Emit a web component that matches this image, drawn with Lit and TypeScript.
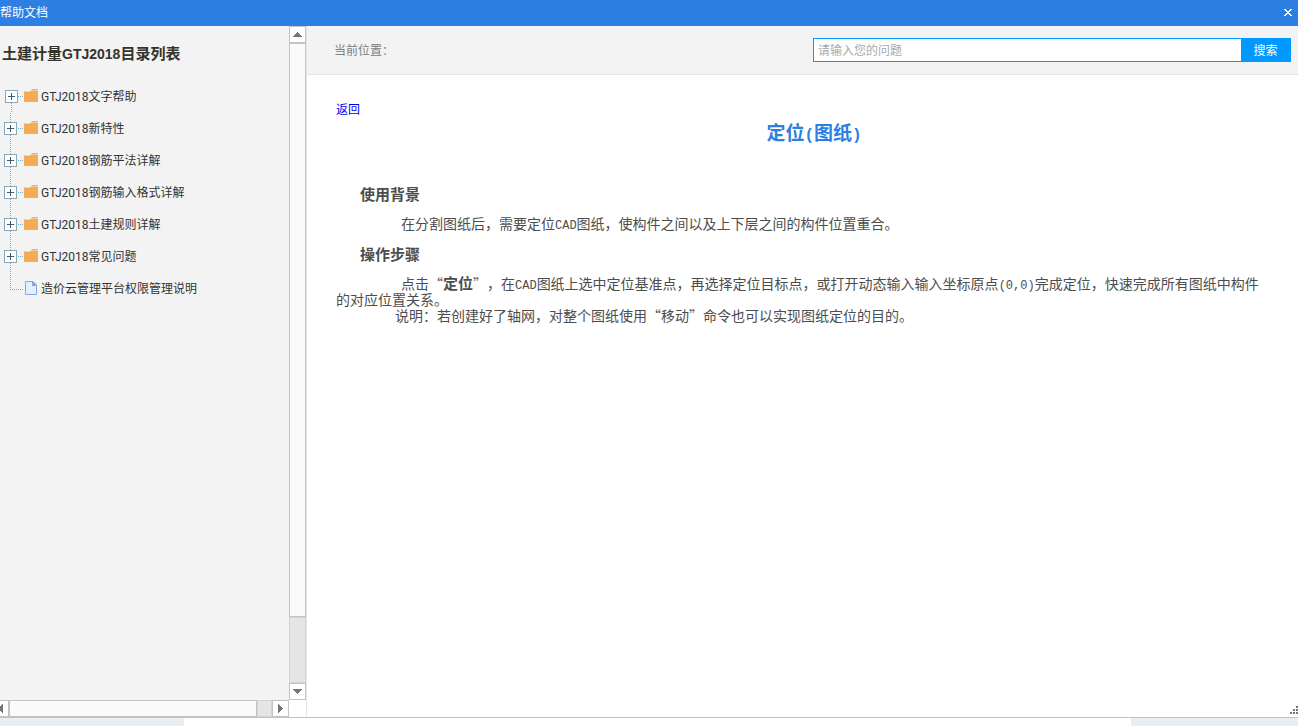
import { LitElement, html, css, svg, nothing } from "lit";
import { customElement, property } from "lit/decorators.js";

type Direction = "up" | "down" | "left" | "right";

interface TreeItem {
  label: string;
  leaf?: boolean;
}

const ITEMS: TreeItem[] = [
  { label: "GTJ2018文字帮助" },
  { label: "GTJ2018新特性" },
  { label: "GTJ2018钢筋平法详解" },
  { label: "GTJ2018钢筋输入格式详解" },
  { label: "GTJ2018土建规则详解" },
  { label: "GTJ2018常见问题" },
  { label: "造价云管理平台权限管理说明", leaf: true },
];

const ARROWS: Record<Direction, string> = {
  up: "M4 11V10H5V9H6V8H7V7H8V6H9V7H10V8H11V9H12V10H13V11Z",
  down: "M4 6V7H5V8H6V9H7V10H8V11H9V10H10V9H11V8H12V7H13V6Z",
  left: "M11 4H10V5H9V6H8V7H7V8H6V9H7V10H8V11H9V12H10V13H11Z",
  right: "M6 4H7V5H8V6H9V7H10V8H11V9H10V10H9V11H8V12H7V13H6Z",
};

@customElement("scroll-bar")
class ScrollBar extends LitElement {
  @property({ reflect: true }) orientation: "vertical" | "horizontal" = "vertical";

  static styles = css`
    :host {
      display: flex;
      flex-direction: column;
      box-sizing: border-box;
      min-width: 0;
      min-height: 0;
      overflow: hidden;
      background: #e5e5e5;
    }
    :host([orientation="horizontal"]) {
      flex-direction: row;
    }
    .arrow {
      flex: none;
      box-sizing: border-box;
      width: 17px;
      height: 17px;
      padding: 0;
      border: 1px solid #c3c3c3;
      background: #fff;
    }
    .arrow svg {
      display: block;
      width: 17px;
      height: 17px;
      margin: -1px;
      fill: #757575;
    }
    .thumb {
      flex: 576;
      box-sizing: border-box;
      border: 1px solid #c3c3c3;
      background: #fafafa;
    }
    .rest {
      flex: 65;
      box-sizing: border-box;
      border: 1px solid #d4d4d4;
    }
    :host([orientation="horizontal"]) .thumb {
      flex: 251;
    }
    :host([orientation="horizontal"]) .rest {
      flex: 13;
    }
    :host([orientation="horizontal"]) .arrow:first-child {
      margin-left: -8px;
    }
  `;

  private arrow(direction: Direction, label: string) {
    return html`<button class="arrow" type="button" aria-label=${label}>
      <svg viewBox="0 0 17 17" shape-rendering="crispEdges"><path d=${ARROWS[direction]}></path></svg>
    </button>`;
  }

  render() {
    const vertical = this.orientation === "vertical";
    return html`${this.arrow(vertical ? "up" : "left", vertical ? "向上" : "向左")}
      <div class="thumb"></div>
      <div class="rest"></div>
      ${this.arrow(vertical ? "down" : "right", vertical ? "向下" : "向右")}`;
  }
}

@customElement("doc-tree")
class DocTree extends LitElement {
  static styles = css`
    :host {
      display: block;
    }
    .list {
      margin: 0;
      padding: 0;
      list-style: none;
    }
    .row {
      display: flex;
      align-items: center;
      height: 32px;
    }
    .toggle {
      flex: none;
      display: block;
      width: 24px;
      height: 32px;
      padding: 0;
      border: 0;
      background: none;
    }
    svg {
      display: block;
      flex: none;
    }
    .label {
      margin-left: 3px;
      color: #333;
      font-family: Roboto, "Noto Sans CJK SC", sans-serif;
      font-size: 12px;
      line-height: 32px;
      white-space: nowrap;
      text-decoration: none;
    }
  `;

  private branch(first: boolean) {
    const x = first ? 5 : 4;
    return html`<button class="toggle" type="button" aria-label="展开">
      <svg width="24" height="32" viewBox="0 0 24 32" shape-rendering="crispEdges" fill="none">
        ${first ? nothing : svg`<path d="M10.5 0V9" stroke="#72b0cf" stroke-dasharray="1 1"></path>`}
        <path d="M${x + 6}.5 22V32M18 15.5H24" stroke="#72b0cf" stroke-dasharray="1 1"></path>
        <rect x="${x}.5" y="9.5" width="12" height="12" fill="#fff" stroke="#86aabd"></rect>
        <path d="M${x + 3} 15.5H${x + 10}M${x + 6}.5 12V19" stroke="#41596b"></path>
      </svg>
    </button>`;
  }

  render() {
    return html`<ul class="list">
      ${ITEMS.map(
        (item, i) => html`<li class="row">
          ${item.leaf
            ? html`<svg width="24" height="32" viewBox="0 0 24 32" shape-rendering="crispEdges" fill="none">
                  <path d="M10.5 0V16M10 16.5H24" stroke="#72b0cf" stroke-dasharray="1 1"></path>
                </svg>
                <svg width="14" height="32" viewBox="0 0 14 32">
                  <path d="M1.5 8.5H9L12.5 12V21.5H1.5Z" fill="#e1efff" stroke="#83a8dc"></path>
                  <path d="M8 8.5H9L12.5 12V13H8Z" fill="#83a8dc"></path>
                </svg>`
            : html`${this.branch(i === 0)}
                <svg width="14" height="32" viewBox="0 0 14 32" fill="#f5ab55">
                  <path d="M7 9.5L8 8H13Q14 8 14 9.5Z"></path>
                  <path d="M0 10.5H6L7 10H14V20Q14 21 13 21H1Q0 21 0 20Z"></path>
                </svg>`}
          <a class="label" href="#">${item.label}</a>
        </li>`
      )}
    </ul>`;
  }
}

@customElement("app-root")
class AppRoot extends LitElement {
  static styles = css`
    :host {
      display: flex;
      flex-direction: column;
      position: relative;
      height: 100vh;
      overflow: hidden;
      background: #fff;
      color: #4d4d4d;
      font-family: "Noto Sans CJK SC", sans-serif;
      font-size: 12px;
      line-height: 16px;
    }
    .titlebar {
      flex: none;
      display: flex;
      align-items: center;
      justify-content: space-between;
      box-sizing: border-box;
      height: 26px;
      padding-bottom: 2px;
      background: #2d7fe2;
      color: #fff;
    }
    .close {
      display: block;
      padding: 4px 6px;
      border: 0;
      background: none;
    }
    .close svg {
      display: block;
    }
    .body {
      flex: 1;
      min-height: 0;
      display: grid;
      grid-template-columns: 307px 1fr;
      border-bottom: 1px solid #bcc3d0;
    }
    .sidebar {
      display: grid;
      grid-template: minmax(0, 1fr) 17px / minmax(0, 1fr) 17px;
      border-right: 1px solid #e5e5e5;
    }
    .contents {
      overflow: hidden;
      background: #f3f3f3;
    }
    .heading {
      margin: 0;
      padding: 16px 2px 17px;
      color: #33332b;
      font-size: 15px;
      line-height: 22px;
      white-space: nowrap;
    }
    .heading .latin {
      font-family: "Liberation Sans", sans-serif;
      font-size: 14px;
      line-height: 16px;
    }
    .main {
      min-width: 0;
    }
    .toolbar {
      display: flex;
      align-items: center;
      justify-content: space-between;
      height: 48px;
      padding: 0 7px 0 27px;
      border-bottom: 1px solid #e3e3e3;
      background: #f3f3f3;
      color: #808080;
    }
    .search {
      display: flex;
      width: 50%;
      max-width: 478px;
      height: 24px;
    }
    .query {
      flex: 1;
      min-width: 0;
      box-sizing: border-box;
      padding: 0 4px;
      border: 1px solid #0099ff;
      border-radius: 0;
      background: #fff;
      font: inherit;
      outline: 0;
    }
    .query::placeholder {
      color: #a9a9a9;
      opacity: 1;
    }
    .submit {
      width: 49px;
      padding: 0 2px 0 0;
      border: 0;
      background: #0099ff;
      color: #fff;
      font: inherit;
    }
    .article {
      padding: 26px 6px 0 29px;
      font-size: 14px;
      text-spacing-trim: space-all;
      text-autospace: no-autospace;
    }
    .back {
      display: block;
      width: max-content;
      color: #0000ee;
      font-size: 12px;
      text-decoration: none;
    }
    .title {
      margin: 3px 0 42px;
      color: #2d7fe2;
      font-size: 19px;
      line-height: 24px;
      text-align: center;
    }
    .title .latin {
      font-family: "Liberation Mono", monospace;
      font-size: 16px;
      line-height: 8px;
    }
    .section {
      margin: 0 24px 13px;
      font-size: 15px;
      line-height: 16px;
    }
    .text {
      margin: 0 28px 15px 0;
      line-height: 16px;
      text-indent: 65px;
    }
    .text .latin {
      font-family: "Liberation Mono", monospace;
      font-size: 12px;
      line-height: 8px;
    }
    .text b {
      font-size: 15px;
      line-height: 8px;
    }
    .steps {
      margin-bottom: 0;
    }
    .note {
      text-indent: 59px;
    }
    .strip {
      flex: none;
      display: grid;
      grid-template-columns: 184px 1fr 167px;
      height: 8px;
    }
    .shade {
      background: #e9edf4;
    }
    .grip {
      position: absolute;
      right: 0;
      bottom: 12px;
      fill: #6d757d;
    }
  `;

  render() {
    return html`
      <header class="titlebar">
        <span>帮助文档</span>
        <button class="close" type="button" aria-label="关闭">
          <svg width="8" height="7" viewBox="0 0 8 7" shape-rendering="crispEdges" fill="#fff">
            <path d="M0 0H2V1H3V2H5V1H6V0H8V1H7V2H6V3H5V4H6V5H7V6H8V7H6V6H5V5H3V6H2V7H0V6H1V5H2V4H3V3H2V2H1V1H0Z"></path>
          </svg>
        </button>
      </header>
      <div class="body">
        <aside class="sidebar">
          <nav class="contents">
            <h2 class="heading">土建计量<span class="latin">GTJ2018</span>目录列表</h2>
            <doc-tree></doc-tree>
          </nav>
          <scroll-bar orientation="vertical"></scroll-bar>
          <scroll-bar orientation="horizontal"></scroll-bar>
        </aside>
        <main class="main">
          <div class="toolbar">
            <span>当前位置：</span>
            <form class="search" @submit=${(e: Event) => e.preventDefault()}>
              <input class="query" type="text" aria-label="请输入您的问题" placeholder="请输入您的问题" />
              <button class="submit" type="submit">搜索</button>
            </form>
          </div>
          <article class="article" lang="zh-CN">
            <a class="back" href="#">返回</a>
            <h1 class="title">定位<span class="latin">(</span>图纸<span class="latin">)</span></h1>
            <h2 class="section">使用背景</h2>
            <p class="text">在分割图纸后，需要定位<span class="latin">CAD</span>图纸，使构件之间以及上下层之间的构件位置重合。</p>
            <h2 class="section">操作步骤</h2>
            <p class="text steps">点击“<b>定位</b>”，在<span class="latin">CAD</span>图纸上选中定位基准点，再选择定位目标点，或打开动态输入输入坐标原点<span class="latin">(0,0)</span>完成定位，快速完成所有图纸中构件的对应位置关系。</p>
            <p class="text note">说明：若创建好了轴网，对整个图纸使用“移动”命令也可以实现图纸定位的目的。</p>
          </article>
        </main>
      </div>
      <div class="strip"><div class="shade"></div><div></div><div class="shade"></div></div>
      <svg class="grip" width="8" height="8" viewBox="0 0 8 8" shape-rendering="crispEdges">
        <path d="M6 0h2v2h-2zM3 3h2v2h-2zM6 3h2v2h-2zM0 6h2v2h-2zM3 6h2v2h-2zM6 6h2v2h-2z"></path>
      </svg>
    `;
  }
}
